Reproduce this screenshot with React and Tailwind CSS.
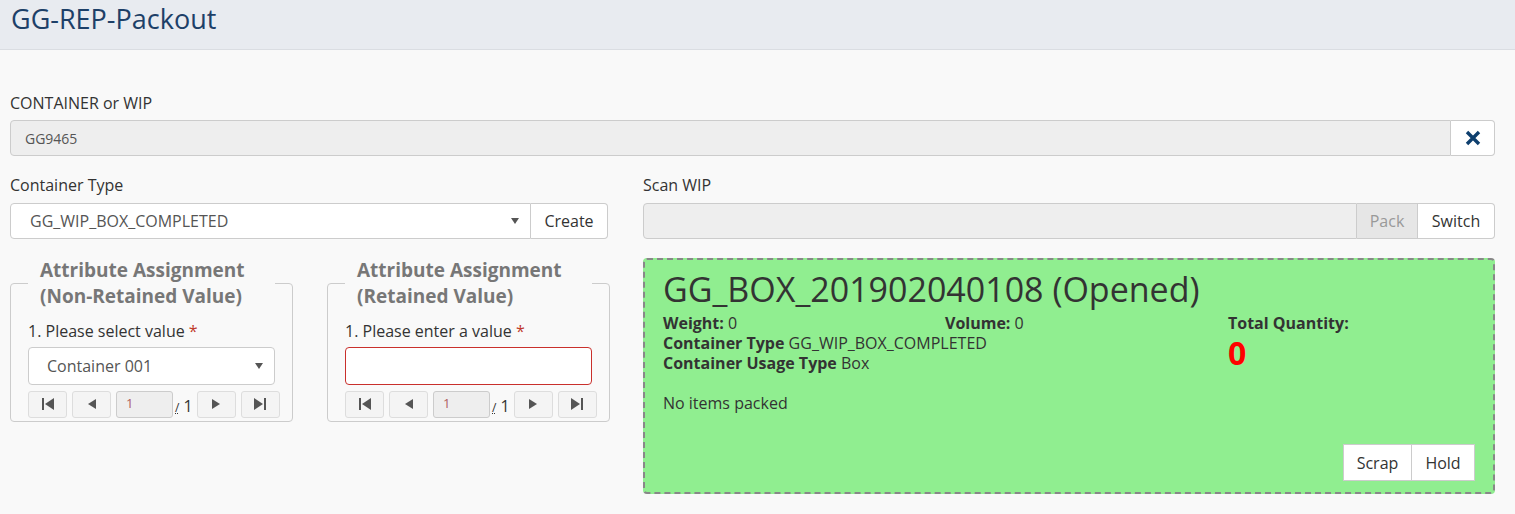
import React from "react";

const font = { fontFamily: '"Open Sans", "Noto Sans", sans-serif' };

function Caret() {
  return (
    <svg width="8" height="6" viewBox="0 0 8 6" className="shrink-0">
      <path d="M0 0 L8 0 L4 6 Z" fill="#555" />
    </svg>
  );
}

function PagerBtn({ type }) {
  return (
    <button className="h-[27px] w-[39px] shrink-0 flex items-center justify-center border border-[#ddd] rounded-[3px] bg-[#f4f4f4]">
      <svg width="14" height="12" viewBox="0 0 14 12">
        {type === "first" && (
          <g fill="#555">
            <rect x="1" y="0" width="2" height="12" />
            <path d="M13 0 L13 12 L4 6 Z" />
          </g>
        )}
        {type === "prev" && <path d="M11 1 L11 11 L3 6 Z" fill="#555" />}
        {type === "next" && <path d="M3 1 L3 11 L11 6 Z" fill="#555" />}
        {type === "last" && (
          <g fill="#555">
            <path d="M1 0 L1 12 L10 6 Z" />
            <rect x="11" y="0" width="2" height="12" />
          </g>
        )}
      </svg>
    </button>
  );
}

function Pager() {
  return (
    <div className="flex items-center mt-[5px] whitespace-nowrap">
      <PagerBtn type="first" />
      <div className="w-[5px] shrink-0" />
      <PagerBtn type="prev" />
      <div className="w-[5px] shrink-0" />
      <div className="h-[27px] w-[57px] shrink-0 border border-[#ccc] rounded-[3px] bg-[#eee] text-[13px] text-[#b06060] pl-[9px] flex items-center">
        1
      </div>
      <span className="text-[16px] text-[#333] ml-[2px] mr-[4px] mt-[6px] leading-[20px]">
        <span className="text-[12px] underline decoration-dotted">/</span> 1
      </span>
      <PagerBtn type="next" />
      <div className="w-[5px] shrink-0" />
      <PagerBtn type="last" />
    </div>
  );
}

function AttrFieldset({ title1, title2, label, children }) {
  return (
    <fieldset className="w-[283px] shrink-0 border border-[#ccc] rounded-[4px] px-[17px] pb-[3px] pt-0 m-0 min-w-0">
      <legend className="w-full pl-[12px] text-[19px] font-bold text-[#777] leading-[26px]">
        {title1}
        <br />
        {title2}
      </legend>
      <div className="text-[16px] text-[#333] mt-[11px] leading-[22px]">
        {label} <span className="text-[#c0392b]">*</span>
      </div>
      <div className="mt-[5px]">{children}</div>
      <Pager />
    </fieldset>
  );
}

export default function App() {
  return (
    <div className="min-h-[514px] bg-[#f9f9f9]" style={font}>
      <div className="h-[50px] bg-[#e8ebf0] border-b border-[#dadde2] flex items-center pl-[11px]">
        <h1 className="text-[27px] text-[#1d4068] leading-none -mt-[12px]">GG-REP-Packout</h1>
      </div>

      <div className="pl-[10px] pr-[20px] pt-[43px]">
        <div className="text-[16px] font-medium text-[#333] leading-[20px]">CONTAINER or WIP</div>
        <div className="flex mt-[7px]">
          <div className="flex-1 h-[36px] border border-[#ccc] rounded-l-[4px] bg-[#eeeeee] text-[14px] text-[#555] flex items-center pl-[14px]">
            GG9465
          </div>
          <button className="w-[44px] h-[36px] border border-l-0 border-[#ccc] rounded-r-[4px] bg-white flex items-center justify-center">
            <svg width="16" height="16" viewBox="0 0 16 16">
              <path d="M2 2 L14 14 M14 2 L2 14" stroke="#0e3f6e" strokeWidth="3.4" strokeLinecap="butt" />
            </svg>
          </button>
        </div>

        <div className="flex mt-[19px] gap-[35px]">
          <div className="w-[598px] shrink-0">
            <div className="text-[16px] font-medium text-[#333] leading-[20px]">Container Type</div>
            <div className="flex mt-[8px]">
              <div className="flex-1 h-[36px] border border-[#ccc] rounded-l-[4px] bg-white flex items-center pl-[19px] pr-[11px] text-[16px] text-[#555]">
                <span className="flex-1">GG_WIP_BOX_COMPLETED</span>
                <Caret />
              </div>
              <button className="w-[77px] h-[36px] border border-l-0 border-[#ccc] rounded-r-[4px] bg-white text-[16px] text-[#333]">
                Create
              </button>
            </div>

            <div className="flex gap-[34px] mt-[18px]">
              <AttrFieldset
                title1="Attribute Assignment"
                title2="(Non-Retained Value)"
                label="1. Please select value"
              >
                <div className="h-[38px] border border-[#ccc] rounded-[4px] bg-white flex items-center pl-[18px] pr-[11px] text-[16px] text-[#555]">
                  <span className="flex-1">Container 001</span>
                  <Caret />
                </div>
              </AttrFieldset>
              <AttrFieldset
                title1="Attribute Assignment"
                title2="(Retained Value)"
                label="1. Please enter a value"
              >
                <div className="h-[38px] border border-[#c9302c] rounded-[4px] bg-white" />
              </AttrFieldset>
            </div>
          </div>

          <div className="flex-1 min-w-0">
            <div className="text-[16px] font-medium text-[#333] leading-[20px]">Scan WIP</div>
            <div className="flex mt-[8px]">
              <div className="flex-1 h-[36px] border border-[#ccc] rounded-l-[4px] bg-[#eeeeee]" />
              <button className="w-[61px] h-[36px] border border-l-0 border-[#ccc] bg-[#e6e6e6] text-[16px] text-[#999]">
                Pack
              </button>
              <button className="w-[77px] h-[36px] border border-l-0 border-[#ccc] rounded-r-[4px] bg-white text-[16px] text-[#333]">
                Switch
              </button>
            </div>

            <div className="mt-[19px] h-[236px] bg-[#90ee90] border-2 border-dashed border-[#888] rounded-[4px] px-[18px] pt-[7px] flex flex-col">
              <div className="text-[34px] text-[#333] leading-[44px] whitespace-nowrap">GG_BOX_201902040108 (Opened)</div>
              <div className="flex text-[16px] text-[#333] leading-[20px] mt-[2px]">
                <div className="w-[565px] shrink-0">
                  <div className="flex">
                    <div className="w-[282px]">
                      <b className="font-bold">Weight:</b> 0
                    </div>
                    <div>
                      <b className="font-bold">Volume:</b> 0
                    </div>
                  </div>
                  <div>
                    <b className="font-bold">Container Type</b> GG_WIP_BOX_COMPLETED
                  </div>
                  <div>
                    <b className="font-bold">Container Usage Type</b> Box
                  </div>
                </div>
                <div>
                  <b className="font-bold">Total Quantity:</b>
                  <div className="text-[32px] font-bold text-[#ff0000] leading-[40px]">0</div>
                </div>
              </div>
              <div className="text-[16px] text-[#333] leading-[20px] mt-[20px]">No items packed</div>
              <div className="flex justify-end mt-[31px]">
                <button className="h-[37px] w-[69px] border border-[#ccc] bg-white text-[16px] text-[#333]">Scrap</button>
                <button className="h-[37px] w-[63px] border border-l-0 border-[#ccc] bg-white text-[16px] text-[#333]">Hold</button>
              </div>
            </div>
          </div>
        </div>
      </div>
    </div>
  );
}
